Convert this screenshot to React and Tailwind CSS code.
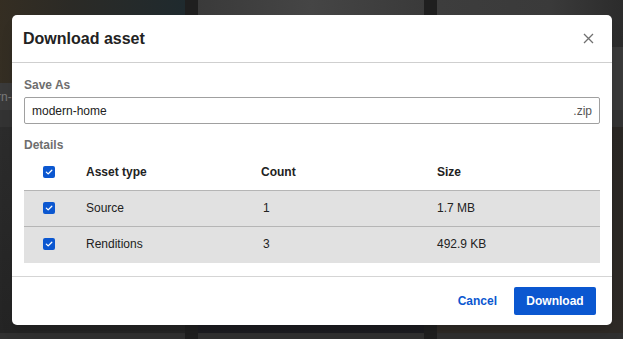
import React from "react";

// Dimmed page behind the modal: a few card columns
function BgCard({ imgTop, band, star, label, topClass, bottomClass }) {
  return (
    <div className="flex w-[226px] shrink-0 flex-col">
      <div className={topClass} style={{ height: imgTop }} />
      <div
        className="flex items-center justify-between bg-[#3a3a3a] px-2 text-[12px] text-[#7a7a7a]"
        style={{ height: band }}
      >
        <span>{label}</span>
        {star && <span className="text-[15px] text-[#5a5a5a]">☆</span>}
      </div>
      <div className="h-[17px] bg-[#333333]" />
      <div className={`h-[206px] ${bottomClass}`} />
      <div className="h-[6px] bg-[#303030]" />
    </div>
  );
}

function Check() {
  return (
    <span className="flex h-[12px] w-[12px] items-center justify-center rounded-[2px] bg-[#0b57d0]">
      <svg width="8" height="8" viewBox="0 0 8 8" fill="none">
        <path d="M1.3 4.1 L3.2 5.9 L6.8 2.2" stroke="white" strokeWidth="1.3" strokeLinecap="round" strokeLinejoin="round" />
      </svg>
    </span>
  );
}

const rows = [
  { type: "Source", count: "1", size: "1.7 MB" },
  { type: "Renditions", count: "3", size: "492.9 KB" },
];

export default function App() {
  return (
    <div
      className="relative h-[339px] w-[623px] overflow-hidden bg-[#1f1f1f]"
      style={{ fontFamily: '"Liberation Sans", Arial, sans-serif' }}
    >
      {/* page content behind */}
      <div className="-ml-[41px] flex gap-[13px]">
        <BgCard
          imgTop={83}
          band={27}
          label="modern-home"
          topClass="bg-gradient-to-r from-[#3a3020] via-[#2b2a26] to-[#1f2a2e]"
          bottomClass="bg-gradient-to-b from-[#2c2c2c] to-[#242424]"
        />
        <BgCard
          imgTop={60}
          band={50}
          label="interior"
          topClass="bg-gradient-to-r from-[#3a3a3a] via-[#454545] to-[#3a3a3a]"
          bottomClass="bg-gradient-to-b from-[#23232a] to-[#1c1c20]"
        />
        <BgCard
          imgTop={47}
          band={63}
          star
          label=""
          topClass="bg-gradient-to-r from-[#3d3d3d] via-[#3a3a3a] to-[#242424]"
          bottomClass="bg-gradient-to-b from-[#2a2724] to-[#2e2a26]"
        />
      </div>

      {/* modal */}
      <div className="absolute left-[12px] top-[15px] flex h-[310px] w-[600px] flex-col rounded-[5px] bg-white shadow-lg">
        <div className="flex h-[48px] shrink-0 items-center justify-between border-b border-[#cfcfcf] pl-[11px] pr-[18px]">
          <h1 className="text-[16px] font-bold text-[#222]">Download asset</h1>
          <svg width="11" height="11" viewBox="0 0 11 11" className="text-[#707070]">
            <path d="M1 1 L10 10 M10 1 L1 10" stroke="currentColor" strokeWidth="1.3" />
          </svg>
        </div>

        <div className="flex flex-1 flex-col px-[12px] pt-[14px] pb-[13px] text-[12px] text-[#222]">
          <div className="h-[16px] font-bold leading-[16px] text-[#6e6e6e]">Save As</div>
          <div className="mt-[4px] flex h-[27px] items-center justify-between rounded-[2px] border border-[#a0a0a0] px-[7px]">
            <span>modern-home</span>
            <span className="text-[#555]">.zip</span>
          </div>
          <div className="mt-[13px] h-[16px] font-bold leading-[16px] text-[#6e6e6e]">Details</div>

          <div className="flex flex-col">
            <div className="flex h-[38px] items-center border-b border-[#b5b5b5] font-bold">
              <div className="w-[62px] pl-[19px]"><Check /></div>
              <div className="w-[175px]">Asset type</div>
              <div className="w-[176px]">Count</div>
              <div className="flex-1">Size</div>
            </div>
            {rows.map((r, i) => (
              <div
                key={r.type}
                className={`flex h-[36px] items-center bg-[#e1e1e1] pb-[2px] ${i === 0 ? "border-b border-[#b5b5b5]" : ""}`}
              >
                <div className="w-[62px] pl-[19px]"><Check /></div>
                <div className="w-[175px]">{r.type}</div>
                <div className="w-[176px] pl-[2px]">{r.count}</div>
                <div className="flex-1">{r.size}</div>
              </div>
            ))}
          </div>
        </div>

        <div className="flex h-[49px] shrink-0 items-center justify-end gap-[17px] border-t border-[#d5d5d5] pr-[16px] text-[12px] font-bold">
          <button className="text-[#0b57d0]">Cancel</button>
          <button className="h-[28px] w-[82px] rounded-[2px] bg-[#0b57d0] text-white">Download</button>
        </div>
      </div>
    </div>
  );
}
